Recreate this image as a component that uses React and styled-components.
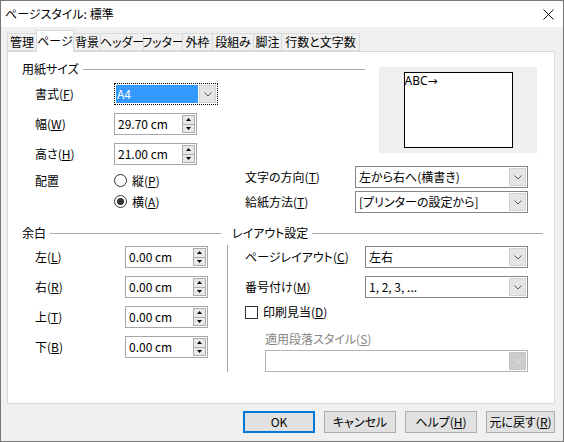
import React from 'react';
import styled, { createGlobalStyle } from 'styled-components';

const Global = createGlobalStyle`
  html, body { margin: 0; padding: 0; }
  body {
    width: 564px; height: 442px; overflow: hidden; background: #f0f0f0;
    font-family: "Noto Sans CJK JP", "Noto Sans", sans-serif;
    font-size: 12px; color: #000;
  }
  * { box-sizing: border-box; }
`;

const Window = styled.div`
  width: 564px; height: 442px;
  border: 1px solid #777;
  background: #f0f0f0;
  display: flex; flex-direction: column;
  font-feature-settings: "palt";
  line-height: 16px;
`;

const TitleBar = styled.div`
  height: 26px; flex: none;
  background: #fff;
  display: flex; align-items: center; justify-content: space-between;
  padding: 0 9px 0 4px;
`;

const TitleText = styled.span`
  font-size: 12px;
`;

const CloseIcon = () => (
  <svg width="11" height="11" viewBox="0 0 11 11">
    <path d="M0.5 0.5 L10.5 10.5 M10.5 0.5 L0.5 10.5" stroke="#111" strokeWidth="1" fill="none" />
  </svg>
);

const TabStrip = styled.div`
  height: 24px; flex: none;
  display: flex; align-items: flex-end;
  padding-left: 6px;
  position: relative; z-index: 1;
`;

const Tab = styled.div`
  width: ${p => p.$w}px;
  height: ${p => (p.$active ? 22 : 18)}px;
  margin-bottom: ${p => (p.$active ? -1 : 0)}px;
  margin-left: -1px;
  &:first-child { margin-left: 0; }
  background: ${p => (p.$active ? '#fff' : '#f0f0f0')};
  border: 1px solid #d9d9d9;
  border-bottom: ${p => (p.$active ? 'none' : '1px solid #d9d9d9')};
  display: flex; align-items: center; justify-content: center;
  padding-bottom: ${p => (p.$active ? 2 : 0)}px;
  white-space: nowrap;
  position: relative;
  z-index: ${p => (p.$active ? 2 : 1)};
`;

const Panel = styled.div`
  margin-left: 6px;
  width: 548px; height: 353px; flex: none;
  background: #fff;
  border: 1px solid #d9d9d9;
  display: flex; flex-direction: column;
`;

const TopSection = styled.div`
  padding: 9px 0 0 14px;
  display: flex; flex-direction: column;
`;

const TopRow = styled.div`
  display: flex; align-items: flex-start;
`;

const LeftCol = styled.div`
  width: ${p => p.$w}px;
  display: flex; flex-direction: column;
`;

const GroupHeading = styled.div`
  height: 16px;
  display: flex; align-items: center; gap: 4px;
  padding-left: ${p => p.$pl || 0}px;
  padding-right: ${p => p.$pr || 0}px;
  white-space: nowrap;
  &::after {
    content: ''; flex: 1; height: 1px; background: #a8a8a8;
  }
`;

const FieldStack = styled.div`
  display: flex; flex-direction: column; gap: 8px;
  padding-left: ${p => p.$pl || 0}px;
  margin-top: ${p => p.$mt || 0}px;
`;

const FormRow = styled.div`
  height: 22px;
  display: flex; align-items: center;
`;

const Label = styled.span`
  width: ${p => p.$w}px; flex: none;
  white-space: nowrap;
  color: ${p => (p.$disabled ? '#858585' : '#000')};
  u { text-underline-offset: 1px; }
`;

const SelectBox = styled.div`
  width: ${p => p.$w}px; height: 22px; flex: none;
  border: 1px ${p => (p.$focused ? 'dotted #000' : 'solid ' + (p.$disabled ? '#b4b4b4' : '#858585'))};
  background: #fff;
  display: flex; align-items: stretch;
  padding: 1px;
`;

const SelectValue = styled.div`
  flex: 1;
  display: flex; align-items: center;
  padding-left: ${p => (p.$focused ? 1 : 2)}px;
  background: ${p => (p.$focused ? '#3399ff' : 'transparent')};
  color: ${p => (p.$focused ? '#fff' : '#000')};
  white-space: nowrap; overflow: hidden;
`;

const ArrowButton = styled.div`
  width: 17px; flex: none;
  margin-left: 1px;
  background: ${p => (p.$disabled ? '#cccccc' : '#e5e5e5')};
  border: 1px solid ${p => (p.$disabled ? '#c4c4c4' : '#d2d2d2')};
  display: flex; align-items: center; justify-content: center;
`;

const Chevron = ({ color }) => (
  <svg width="8" height="5" viewBox="0 0 8 5">
    <path d="M0.5 0.5 L4 4 L7.5 0.5" stroke={color} strokeWidth="1" fill="none" />
  </svg>
);

const Select = ({ w, value, focused, disabled }) => (
  <SelectBox $w={w} $focused={focused} $disabled={disabled}>
    <SelectValue $focused={focused}>{value}</SelectValue>
    <ArrowButton $disabled={disabled}>
      <Chevron color={disabled ? '#e6e6e6' : '#5a5a5a'} />
    </ArrowButton>
  </SelectBox>
);

const SpinBox = styled.div`
  width: ${p => p.$w}px; height: 22px; flex: none;
  border: 1px solid #a6a6a6;
  background: #fff;
  display: flex; align-items: center; justify-content: space-between;
  padding: 0 1px 0 3px;
`;

const SpinButtons = styled.div`
  width: 13px; height: 18px;
  border: 1px solid #adadad;
  background: #e8e8e8;
  display: flex; flex-direction: column;
`;

const SpinHalf = styled.div`
  flex: 1;
  display: flex; align-items: center; justify-content: center;
  & + & { border-top: 1px solid #adadad; }
`;

const Tri = ({ up }) => (
  <svg width="5" height="3" viewBox="0 0 5 3">
    <path d={up ? 'M0 3 L2.5 0 L5 3 Z' : 'M0 0 L2.5 3 L5 0 Z'} fill="#000" />
  </svg>
);

const Spin = ({ w, value }) => (
  <SpinBox $w={w}>
    <span>{value}</span>
    <SpinButtons>
      <SpinHalf><Tri up /></SpinHalf>
      <SpinHalf><Tri /></SpinHalf>
    </SpinButtons>
  </SpinBox>
);

const Preview = styled.div`
  width: 158px; height: 86px;
  margin: 6px 0 0 14px;
  background: #efefef;
  display: flex; align-items: center; justify-content: center;
`;

const PreviewPage = styled.div`
  width: 109px; height: 76px;
  background: #fff;
  border: 1px solid #000;
  padding: 1px 0 0 0;
  font-family: "Noto Sans", "DejaVu Sans", sans-serif;
  font-size: 12px;
  line-height: 14px;
`;

const PlacementRow = styled.div`
  display: flex;
  margin-top: 1px;
  padding-left: 13px;
`;

const RadioPart = styled.div`
  width: 210px;
  display: flex;
  padding-top: 4px;
`;

const RadioGroup = styled.div`
  display: flex; flex-direction: column;
`;

const OptionRow = styled.label`
  height: ${p => p.$h || 21}px;
  display: flex; align-items: center; gap: 5px;
  margin-top: ${p => p.$mt || 0}px;
  padding-left: ${p => p.$pl || 0}px;
`;

const RadioCircle = styled.span`
  width: 13px; height: 13px; flex: none;
  border: 1px solid #333;
  border-radius: 50%;
  background: #fff;
  display: flex; align-items: center; justify-content: center;
  &::after {
    content: '';
    width: 7px; height: 7px; border-radius: 50%;
    background: ${p => (p.$checked ? '#333' : 'transparent')};
  }
`;

const CheckSquare = styled.span`
  width: 13px; height: 13px; flex: none;
  border: 1px solid #333;
  background: #fff;
`;

const TallLabel = styled(Label)`
  height: 21px; display: flex; align-items: center;
`;

const SelectStack = styled.div`
  display: flex; flex-direction: column; gap: 3px;
`;

const BottomSection = styled.div`
  display: flex;
  margin-top: 12px;
  padding-left: 14px;
`;

const RightGroup = styled.div`
  flex: 1;
  display: flex; flex-direction: column;
`;

const LayoutBody = styled.div`
  margin-top: 4px;
  border-left: 1px solid #a8a8a8;
  padding: 1px 0 0 17px;
  display: flex; flex-direction: column;
`;

const RowGap = styled.div`
  display: flex; flex-direction: column; gap: 8px;
`;

const SubLabel = styled.div`
  height: 14px;
  display: flex; align-items: center;
  margin-top: 13px;
  padding-left: 20px;
  color: #858585;
  u { text-underline-offset: 1px; }
`;

const Indent = styled.div`
  padding-left: 20px;
  margin-top: 4px;
`;

const ButtonBar = styled.div`
  flex: 1;
  display: flex; justify-content: flex-end; align-items: flex-start;
  gap: 9px;
  padding: 7px 8px 0 0;
`;

const Button = styled.button`
  width: ${p => p.$w}px; height: 22px;
  font: inherit; font-feature-settings: "palt";
  color: #000;
  background: #e1e1e1;
  border: ${p => (p.$default ? '2px solid #0078d7' : '1px solid #adadad')};
  padding: 0;
  display: flex; align-items: center; justify-content: center;
  u { text-underline-offset: 1px; }
`;

const tabs = [
  ['管理', 30], ['ページ', 38], ['背景', 28], ['ヘッダー', 44], ['フッター', 40],
  ['外枠', 31], ['段組み', 42], ['脚注', 29], ['行数と文字数', 79],
];

const M = ({ text, k }) => (
  <>
    {text}(<u>{k}</u>)
  </>
);

export default function App() {
  return (
    <>
      <Global />
      <Window>
        <TitleBar>
          <TitleText>ページスタイル: 標準</TitleText>
          <CloseIcon />
        </TitleBar>
        <TabStrip>
          {tabs.map(([t, w]) => (
            <Tab key={t} $w={w} $active={t === 'ページ'}>{t}</Tab>
          ))}
        </TabStrip>
        <Panel>
          <TopSection>
            <TopRow>
              <LeftCol $w={343}>
                <GroupHeading>用紙サイズ</GroupHeading>
                <FieldStack $pl={13} $mt={6}>
                  <FormRow>
                    <Label $w={79}><M text="書式" k="F" /></Label>
                    <Select w={104} value="A4" focused />
                  </FormRow>
                  <FormRow>
                    <Label $w={79}><M text="幅" k="W" /></Label>
                    <Spin w={83} value="29.70 cm" />
                  </FormRow>
                  <FormRow>
                    <Label $w={79}><M text="高さ" k="H" /></Label>
                    <Spin w={83} value="21.00 cm" />
                  </FormRow>
                </FieldStack>
              </LeftCol>
              <Preview>
                <PreviewPage>ABC→</PreviewPage>
              </Preview>
            </TopRow>
            <PlacementRow>
              <RadioPart>
                <TallLabel $w={79}>配置</TallLabel>
                <RadioGroup>
                  <OptionRow>
                    <RadioCircle />
                    <span><M text="縦" k="P" /></span>
                  </OptionRow>
                  <OptionRow>
                    <RadioCircle $checked />
                    <span><M text="横" k="A" /></span>
                  </OptionRow>
                </RadioGroup>
              </RadioPart>
              <SelectStack>
                <FormRow>
                  <Label $w={110}><M text="文字の方向" k="T" /></Label>
                  <Select w={173} value="左から右へ(横書き)" />
                </FormRow>
                <FormRow>
                  <Label $w={110}><M text="給紙方法" k="T" /></Label>
                  <Select w={173} value="[プリンターの設定から]" />
                </FormRow>
              </SelectStack>
            </PlacementRow>
          </TopSection>
          <BottomSection>
            <LeftCol $w={205}>
              <GroupHeading $pr={6}>余白</GroupHeading>
              <FieldStack $pl={13} $mt={5}>
                <FormRow>
                  <Label $w={90}><M text="左" k="L" /></Label>
                  <Spin w={83} value="0.00 cm" />
                </FormRow>
                <FormRow>
                  <Label $w={90}><M text="右" k="R" /></Label>
                  <Spin w={83} value="0.00 cm" />
                </FormRow>
                <FormRow>
                  <Label $w={90}><M text="上" k="T" /></Label>
                  <Spin w={83} value="0.00 cm" />
                </FormRow>
                <FormRow>
                  <Label $w={90}><M text="下" k="B" /></Label>
                  <Spin w={83} value="0.00 cm" />
                </FormRow>
              </FieldStack>
            </LeftCol>
            <RightGroup>
              <GroupHeading $pl={5} $pr={11}>レイアウト設定</GroupHeading>
              <LayoutBody>
                <RowGap>
                  <FormRow>
                    <Label $w={120}><M text="ページレイアウト" k="C" /></Label>
                    <Select w={163} value="左右" />
                  </FormRow>
                  <FormRow>
                    <Label $w={120}><M text="番号付け" k="M" /></Label>
                    <Select w={163} value="1, 2, 3, ..." />
                  </FormRow>
                </RowGap>
                <OptionRow $h={14} $mt={7}>
                  <CheckSquare />
                  <span><M text="印刷見当" k="D" /></span>
                </OptionRow>
                <SubLabel><M text="適用段落スタイル" k="S" /></SubLabel>
                <Indent>
                  <Select w={263} value="" disabled />
                </Indent>
              </LayoutBody>
            </RightGroup>
          </BottomSection>
        </Panel>
        <ButtonBar>
          <Button $w={72} $default>OK</Button>
          <Button $w={72}>キャンセル</Button>
          <Button $w={72}><M text="ヘルプ" k="H" /></Button>
          <Button $w={69}><M text="元に戻す" k="R" /></Button>
        </ButtonBar>
      </Window>
    </>
  );
}
